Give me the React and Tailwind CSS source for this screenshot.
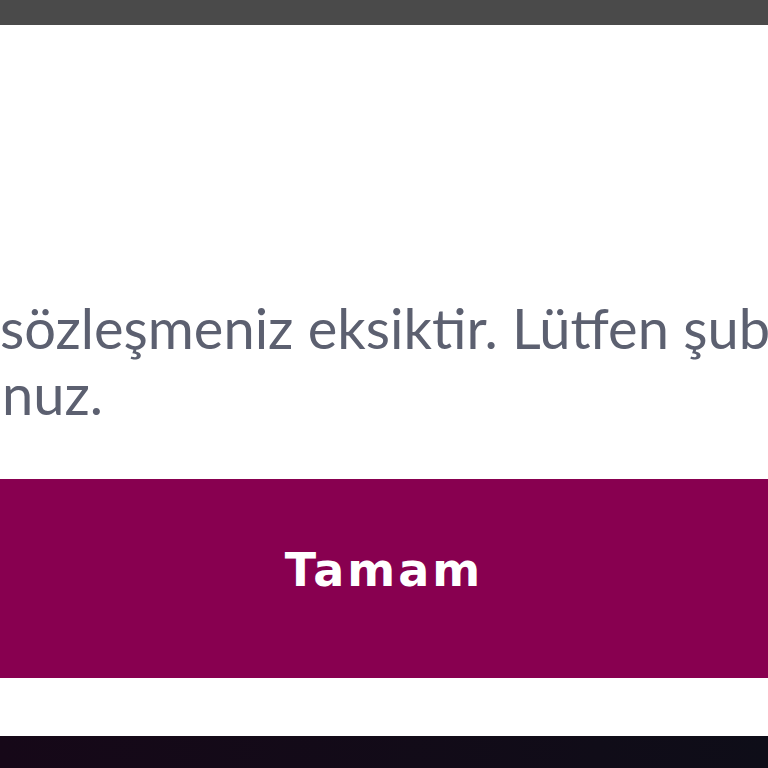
import React from "react";

export default function App() {
  return (
    <div className="flex h-[768px] w-[768px] flex-col overflow-hidden bg-white font-['Lato',sans-serif]">
      <div className="h-[25px] shrink-0 bg-[#4a4a4a]" />

      {/* message */}
      <div className="flex h-[454px] shrink-0 flex-col justify-end pb-[52px] text-[#5c6070]">
        <p className="whitespace-nowrap text-[56px] leading-[66px]">sözleşmeniz eksiktir. Lütfen şub</p>
        <p className="whitespace-nowrap pl-[2px] text-[56px] leading-[66px]">nuz.</p>
      </div>

      {/* button */}
      <button className="flex h-[199px] shrink-0 items-center justify-center bg-[#880050] pb-[16px] font-['DejaVu_Sans',sans-serif] text-[46px] font-bold tracking-[3px] text-white">
        Tamam
      </button>

      <div className="h-[58px] shrink-0 bg-white" />
      <div className="flex-1 bg-gradient-to-r from-[#160818] to-[#0e0d18]" />
    </div>
  );
}
